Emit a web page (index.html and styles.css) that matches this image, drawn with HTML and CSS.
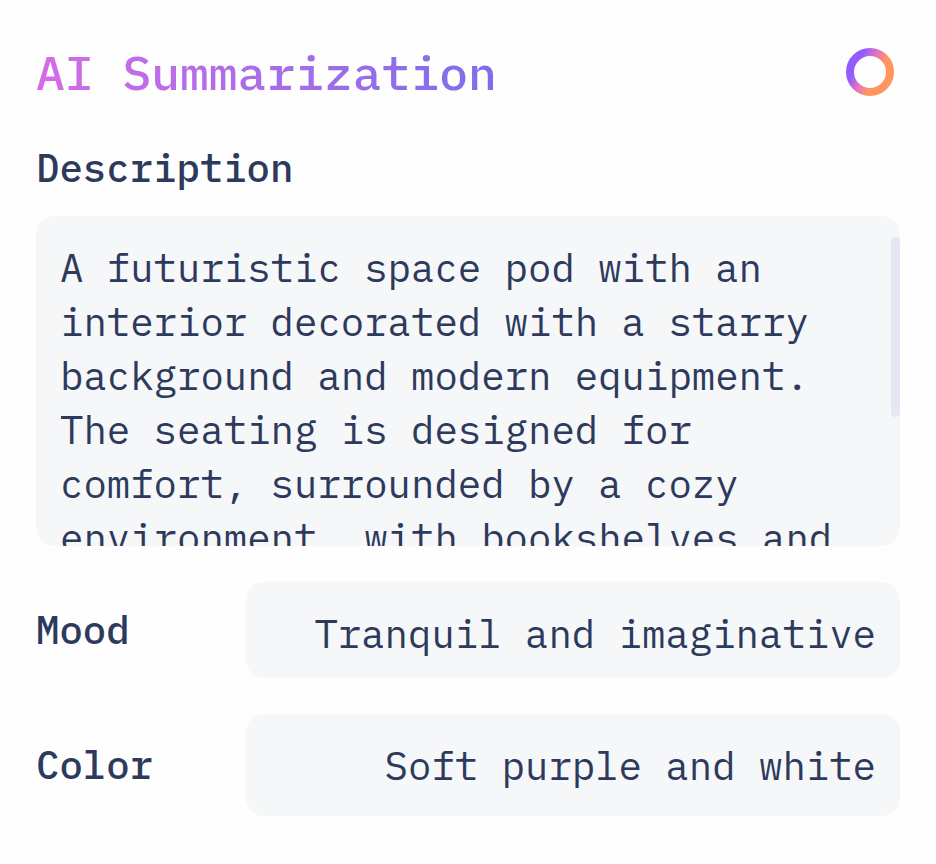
FILE: index.html
```html
<!DOCTYPE html>
<html lang="en">
<head>
<meta charset="utf-8">
<title>AI Summarization</title>
<link rel="stylesheet" href="styles.css">
</head>
<body>
<main class="panel">
  <header class="header">
    <h1 class="title">AI Summarization</h1>
    <svg class="ring" viewBox="0 0 48 48" aria-hidden="true">
      <defs>
        <linearGradient id="ring-fill" gradientUnits="userSpaceOnUse" x1="6" y1="14" x2="42" y2="34">
          <stop offset="0.14" stop-color="#925cff"/>
          <stop offset="0.44" stop-color="#ea75bd"/>
          <stop offset="0.7" stop-color="#ff965f"/>
        </linearGradient>
      </defs>
      <circle cx="24" cy="24" r="20" fill="none" stroke="url(#ring-fill)" stroke-width="8"/>
    </svg>
  </header>
  <h2 class="label">Description</h2>
  <section class="description">
    <p class="copy">A futuristic space pod with an interior decorated with a starry background and modern equipment. The seating is designed for comfort, surrounded by a cozy environment, with bookshelves and</p>
    <span class="thumb"></span>
  </section>
  <div class="row mood">
    <h2 class="label">Mood</h2>
    <p class="value">Tranquil and imaginative</p>
  </div>
  <div class="row color">
    <h2 class="label">Color</h2>
    <p class="value">Soft purple and white</p>
  </div>
</main>
</body>
</html>
```
FILE: styles.css
```css
* { box-sizing: border-box; }
body {
  margin: 0;
  background: #fefefe;
  color: #2d3a5c;
  font-family: "IBM Plex Mono", "Liberation Mono", monospace;
  font-size: 39px;
  line-height: 54px;
}
h1, h2, p { margin: 0; font-weight: 400; }
.panel {
  height: 864px;
  padding: 42px 36px 48px;
  overflow: hidden;
}
.header {
  display: flex;
  justify-content: space-between;
  height: 60px;
}
.title {
  font-size: 48px;
  font-weight: 500;
  line-height: 60px;
  color: transparent;
  background: linear-gradient(90deg, #d56be6, #7d6eea);
  background-clip: text;
  -webkit-background-clip: text;
}
.ring { width: 48px; height: 48px; margin: 6px 6px 0 0; }
.label {
  font-size: 39px;
  font-weight: 500;
}
.panel > .label { margin-top: 39px; }
.description {
  position: relative;
  height: 330px;
  margin-top: 21px;
  padding: 25px 24px 0;
  overflow: hidden;
  border-radius: 18px;
  background: #f5f7f9;
}
.thumb {
  position: absolute;
  top: 21px;
  right: 0;
  width: 9px;
  height: 180px;
  border-radius: 4.5px;
  background: #e3e8f2;
}
.row {
  display: grid;
  grid-template-columns: 210px 1fr;
  margin-top: 36px;
}
.value {
  padding-right: 24px;
  border-radius: 18px;
  background: #f5f7f9;
  text-align: right;
}
.mood { height: 96px; }
.mood .label { padding-top: 21px; }
.mood .value { padding-top: 25px; }
.color { height: 102px; }
.color .label { padding-top: 24px; }
.color .value { padding-top: 25px; }
```
